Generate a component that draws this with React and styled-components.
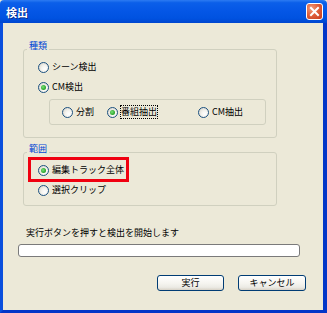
import React from "react";
import styled, { createGlobalStyle, css } from "styled-components";

const Global = createGlobalStyle`
  html, body { margin: 0; padding: 0; overflow: hidden; background: #ECE9D8; }
  * { box-sizing: border-box; }
`;

const FONT = `"Noto Sans CJK JP", "Liberation Sans", sans-serif`;

const Window = styled.div`
  width: 327px;
  height: 313px;
  display: flex;
  flex-direction: column;
  font-family: ${FONT};
  font-size: 9px;
  color: #000;
`;

const TitleBar = styled.div`
  height: 23px;
  flex: none;
  display: flex;
  align-items: center;
  padding: 0 4px 0 6px;
  background: linear-gradient(
    #2C7BF2 0%,
    #0B5FE9 12%,
    #0557E6 45%,
    #0052E0 80%,
    #0046CF 100%
  );
  border-radius: 4px 4px 0 0;
`;

const Title = styled.span`
  color: #fff;
  font-weight: bold;
  font-size: 11px;
  letter-spacing: 0px;
  text-shadow: 1px 1px 0 #0A2A8C;
  flex: 1;
`;

const CloseButton = styled.div`
  width: 17px;
  height: 17px;
  border: 1px solid #fff;
  border-radius: 3px;
  background: radial-gradient(circle at 30% 30%, #F29B7C 0%, #E0603B 45%, #C73A1C 100%);
  display: flex;
  align-items: center;
  justify-content: center;
`;

const Frame = styled.div`
  flex: 1;
  display: flex;
  flex-direction: column;
  background: #ECE9D8;
  border-left: 3px solid #0A4FDD;
  border-right: 4px solid #0336C8;
  border-bottom: 3px solid #0336C8;
  padding-top: 26px;
`;

const Group = styled.div`
  position: relative;
  margin-left: 20px;
  width: 254px;
  height: ${(p) => p.$h}px;
  border: 1px solid #D0D0BF;
  border-radius: 3px;
  padding: 7px 0 0 14px;
  margin-top: ${(p) => p.$mt || 0}px;
`;

const Legend = styled.span`
  position: absolute;
  top: -10px;
  left: 3px;
  height: 12px;
  line-height: 12px;
  padding: 0 2px;
  background: #ECE9D8;
  color: #0046D5;
`;

const Row = styled.div`
  height: 20px;
  display: flex;
  align-items: center;
`;

const RadioWrap = styled.label`
  display: flex;
  align-items: center;
  gap: 3px;
  height: 12px;
  line-height: 12px;
  white-space: nowrap;
`;

const Circle = styled.span`
  width: 11px;
  height: 11px;
  border-radius: 50%;
  border: 1px solid #1C5180;
  background: radial-gradient(circle at 65% 65%, #FFFFFF 0%, #F4F3EE 40%, #D2CFC4 100%);
  display: flex;
  align-items: center;
  justify-content: center;
  flex: none;
  ${(p) =>
    p.$checked &&
    css`
      &::after {
        content: "";
        width: 5px;
        height: 5px;
        border-radius: 50%;
        background: radial-gradient(circle at 40% 40%, #7BE07B 0%, #2FAA2F 60%, #1D861D 100%);
      }
    `}
`;

const LabelText = styled.span`
  ${(p) =>
    p.$focus &&
    css`
      outline: 1px dotted #000;
      outline-offset: 0px;
    `}
`;

const Radio = ({ checked, focus, children }) => (
  <RadioWrap>
    <Circle $checked={checked} />
    <LabelText $focus={focus}>{children}</LabelText>
  </RadioWrap>
);

const InnerBox = styled.div`
  margin: 2px 0 0 11px;
  width: 217px;
  height: 26px;
  border: 1px solid #D0D0BF;
  border-radius: 3px;
  display: grid;
  grid-template-columns: 45px 91px auto;
  align-items: center;
  padding-left: 12px;
`;

const Highlight = styled.div`
  position: absolute;
  left: 4px;
  top: 4px;
  width: 101px;
  height: 25px;
  border: 3px solid #F00010;
  pointer-events: none;
`;

const Hint = styled.div`
  margin: 21px 0 0 23px;
  height: 12px;
  line-height: 12px;
`;

const Progress = styled.div`
  margin: 5px 0 0 15px;
  width: 282px;
  height: 13px;
  border: 1px solid #7A7A7A;
  border-radius: 3px;
  background: #fff;
`;

const ButtonRow = styled.div`
  margin: 18px 17px 0 0;
  display: flex;
  justify-content: flex-end;
  gap: 14px;
`;

const Button = styled.div`
  width: ${(p) => p.$w}px;
  height: 16px;
  border: 1px solid #003C74;
  border-radius: 3px;
  background: linear-gradient(#FFFFFF 0%, #F6F5F0 50%, #ECEBE5 80%, #D8D2C6 100%);
  display: flex;
  align-items: center;
  justify-content: center;
  line-height: 12px;
`;

export default function App() {
  return (
    <>
      <Global />
      <Window>
        <TitleBar>
          <Title>検出</Title>
          <CloseButton>
            <svg width="11" height="11" viewBox="0 0 11 11">
              <path d="M2 2 L9 9 M9 2 L2 9" stroke="#fff" strokeWidth="2" strokeLinecap="square" />
            </svg>
          </CloseButton>
        </TitleBar>
        <Frame>
          <Group $h={89}>
            <Legend>種類</Legend>
            <Row>
              <Radio>シーン検出</Radio>
            </Row>
            <Row>
              <Radio checked>CM検出</Radio>
            </Row>
            <InnerBox>
              <Radio>分割</Radio>
              <Radio checked focus>番組抽出</Radio>
              <Radio>CM抽出</Radio>
            </InnerBox>
          </Group>
          <Group $h={54} $mt={14}>
            <Legend>範囲</Legend>
            <Highlight />
            <Row>
              <Radio checked>編集トラック全体</Radio>
            </Row>
            <Row>
              <Radio>選択クリップ</Radio>
            </Row>
          </Group>
          <Hint>実行ボタンを押すと検出を開始します</Hint>
          <Progress />
          <ButtonRow>
            <Button $w={67}>実行</Button>
            <Button $w={68}>キャンセル</Button>
          </ButtonRow>
        </Frame>
      </Window>
    </>
  );
}
